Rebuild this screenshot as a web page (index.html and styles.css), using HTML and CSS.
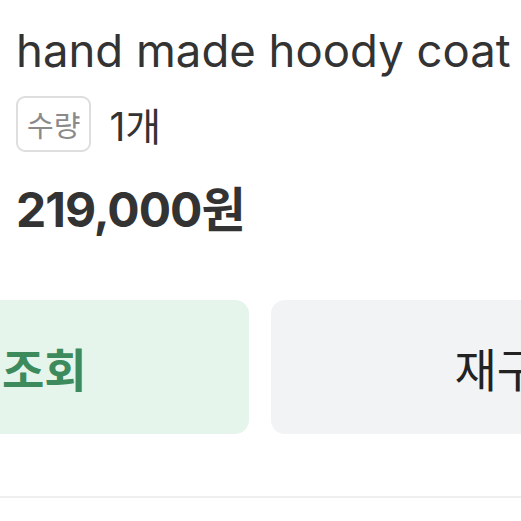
FILE: index.html
```html
<!DOCTYPE html>
<html lang="ko">
<head>
  <meta charset="utf-8">
  <title>hand made hoody coat</title>
  <link rel="stylesheet" href="styles.css">
</head>
<body>
  <div class="product">
    <h1 class="title">hand made hoody coat</h1>
    <div class="qty">
      <span class="qty-tag">수량</span>
      <span class="qty-count">1개</span>
    </div>
    <div class="price">219,000<span class="won">원</span></div>
  </div>
  <div class="actions">
    <button class="btn btn-green">시세조회</button>
    <button class="btn btn-gray">재구매</button>
  </div>
  <div class="divider"></div>
</body>
</html>
```

FILE: styles.css
```css
body {
  margin: 0;
  background-color: #fff;
  font-family: Inter, "Noto Sans CJK KR", sans-serif;
  color: #333;
  overflow: hidden;
}

.product {
  padding: 23px 16px 0;
}

.title {
  margin: 0;
  font-size: 45.5px;
  line-height: 56px;
  font-weight: 400;
  color: #333;
  white-space: nowrap;
}

.qty {
  display: flex;
  align-items: center;
  margin-top: 17px;
}

.qty-tag {
  padding: 0 9px;
  border: 2px solid #dedede;
  border-radius: 9px;
  font-family: "Noto Sans CJK KR", sans-serif;
  font-size: 29px;
  line-height: 52px;
  color: #8a8a8a;
}

.qty-count {
  margin-left: 18px;
  font-size: 39px;
  color: #333;
}

.price {
  margin-top: 26px;
  font-size: 48px;
  line-height: 56px;
  font-weight: 700;
  color: #333;
  letter-spacing: -1px;
}

.price .won {
  font-family: "Noto Sans CJK KR", sans-serif;
  letter-spacing: 0;
}

.actions {
  display: flex;
  gap: 22px;
  margin: 62px 0 0 -245px;
}

.btn {
  flex: 0 0 494px;
  height: 134px;
  border: none;
  border-radius: 14px;
  font-family: "Noto Sans CJK KR", sans-serif;
  font-size: 46px;
  padding: 0;
}

.btn-green {
  background-color: #e6f5ec;
  color: #3d8b5d;
  font-weight: 700;
}

.btn-gray {
  background-color: #f2f3f5;
  color: #222;
  font-weight: 400;
}

.divider {
  margin-top: 62px;
  height: 2px;
  background-color: #efefef;
}
```
